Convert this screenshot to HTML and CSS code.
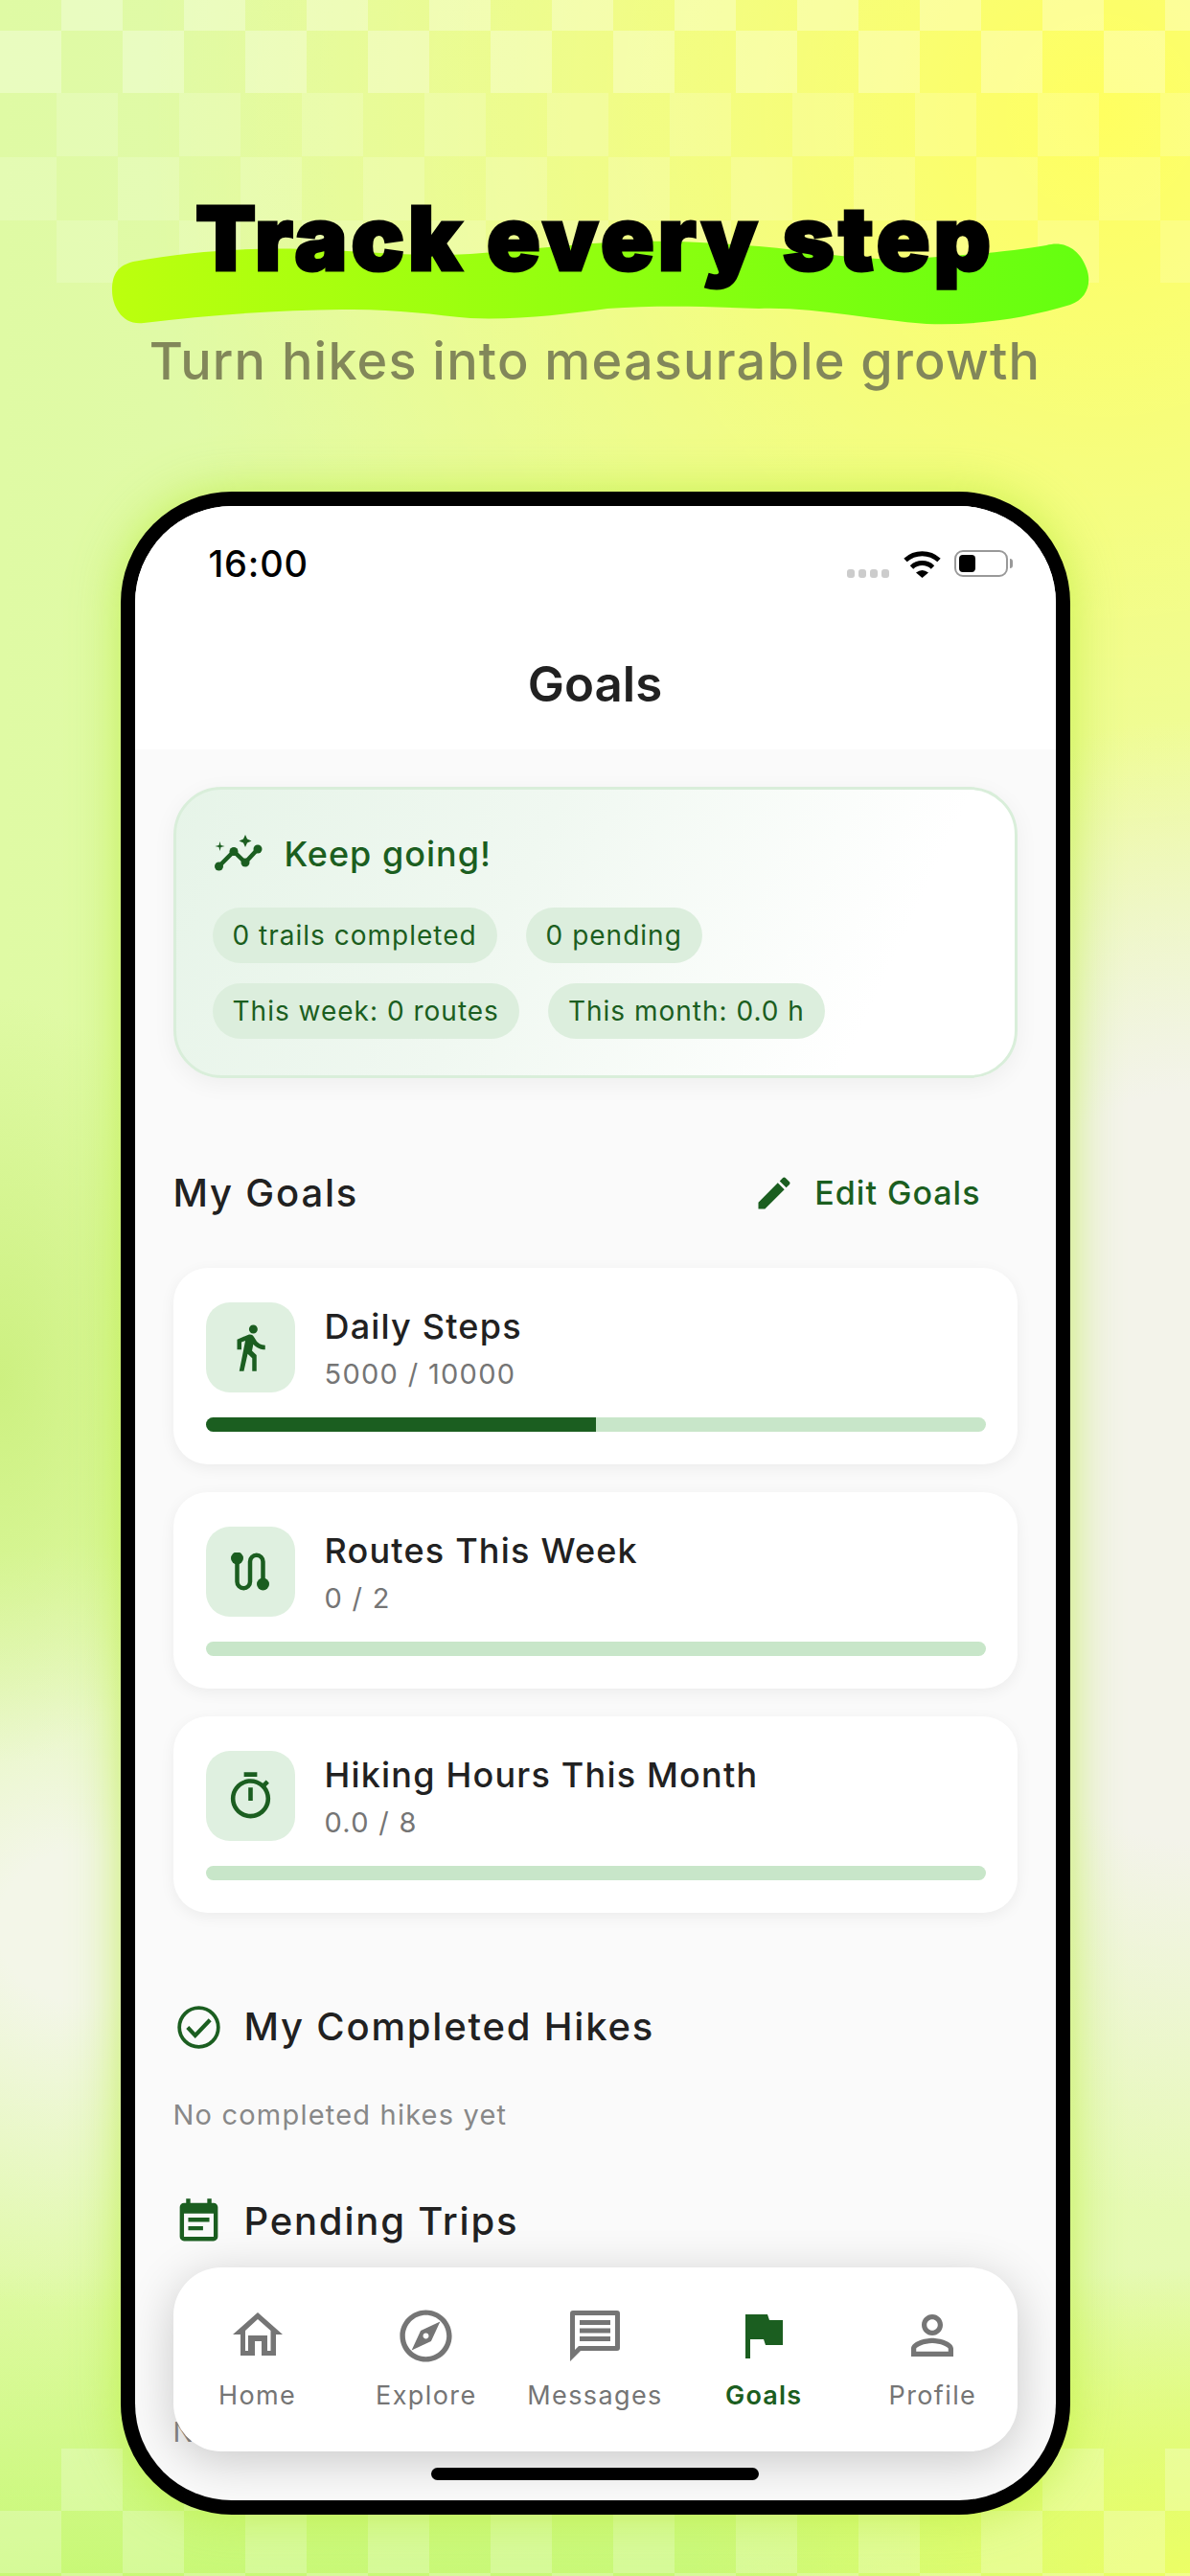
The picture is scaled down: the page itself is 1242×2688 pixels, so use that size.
FILE: index.html
```html
<!DOCTYPE html>
<html lang="en">
<head>
<meta charset="utf-8">
<title>Track every step</title>
<link rel="stylesheet" href="styles.css">
</head>
<body>
<main class="page">
  <div class="checker checker-a"></div>
  <div class="checker checker-b"></div>
  <div class="checker checker-c"></div>

  <header class="hero">
    <svg class="swash" viewBox="0 0 1242 513" aria-hidden="true">
      <defs>
        <linearGradient id="sw" x1="0" x2="1" y1="0" y2="0">
          <stop offset="0" stop-color="#bcff0e"/>
          <stop offset="1" stop-color="#64ff10"/>
        </linearGradient>
      </defs>
      <path fill="url(#sw)" d="M139 273C200 262 260 258 317 260C380 262 430 268 491 265C560 260 630 250 697 252C730 252 760 255 792 257C850 262 900 273 951 270C1010 266 1060 262 1092 256C1112 250 1128 262 1134 280C1140 296 1134 312 1117 318C1070 332 1020 340 967 338C910 334 850 320 792 322C740 320 690 318 634 322C590 328 540 334 491 332C450 328 410 322 357 323C290 324 220 328 150 337C128 340 117 320 117 303C117 285 124 277 139 273Z"/>
    </svg>
    <h1 class="hero-title">Track every step</h1>
    <p class="hero-sub">Turn hikes into measurable growth</p>
  </header>

  <section class="phone">
    <div class="screen">
      <div class="topbar">
        <div class="status">
          <span class="time">16:00</span>
          <div class="status-icons">
            <span class="signal"><i></i><i></i><i></i><i></i></span>
            <svg class="wifi" viewBox="0 0 39 30" aria-hidden="true">
              <path d="M2 11.500A26 26 0 0 1 37 11.500" fill="none" stroke="#000" stroke-width="5"/>
              <path d="M8.500 19A16 16 0 0 1 30.500 19" fill="none" stroke="#000" stroke-width="5"/>
              <path d="M13 24.500Q19.500 19.500 26 24.500L19.500 30Z" fill="#000"/>
            </svg>
            <span class="battery"><span class="battery-fill"></span></span>
            <span class="battery-nub"></span>
          </div>
        </div>
        <h2 class="app-title">Goals</h2>
      </div>

      <div class="content">
        <article class="summary">
          <div class="summary-head">
            <svg class="spark" viewBox="-2 0 54 40" aria-hidden="true">
              <path d="M4.500 33L20 17.500L32 29L45 15" fill="none" stroke="#1b5e20" stroke-width="4.500"/>
              <circle cx="4.500" cy="33" r="4.500" fill="#1b5e20"/>
              <circle cx="20" cy="17.500" r="4.500" fill="#1b5e20"/>
              <circle cx="32" cy="29" r="4.500" fill="#1b5e20"/>
              <circle cx="45" cy="15" r="4.500" fill="#1b5e20"/>
              <path d="M32 0L34 4.500L38.500 6.500L34 8.500L32 13L30 8.500L25.500 6.500L30 4.500Z" fill="#1b5e20"/>
              <path d="M5.500 7L6.500 11L10.500 12L6.500 13L5.500 17L4.500 13L.5 12L4.500 11Z" fill="#1b5e20"/>
            </svg>
            <h3 class="summary-title">Keep going!</h3>
          </div>
          <div class="chips">
            <span class="chip">0 trails completed</span>
            <span class="chip">0 pending</span>
            <span class="chip">This week: 0 routes</span>
            <span class="chip">This month: 0.0 h</span>
          </div>
        </article>

        <div class="goals-head">
          <h3 class="section-title">My Goals</h3>
          <div class="edit">
            <svg class="edit-icon" viewBox="0 0 24 24" aria-hidden="true"><path d="M3 17.250V21h3.750L17.810 9.940l-3.750-3.750L3 17.250zM20.710 7.040c.39-.39.39-1.020 0-1.410l-2.340-2.340c-.39-.39-1.020-.39-1.410 0l-1.830 1.830 3.750 3.750 1.830-1.830z"/></svg>
            <span class="edit-label">Edit Goals</span>
          </div>
        </div>

        <div class="goal-list">
          <article class="goal">
            <div class="goal-top">
              <div class="goal-icon">
                <svg class="walk" viewBox="0 0 24 24" aria-hidden="true"><path d="M13.500 5.500c1.100 0 2-.9 2-2s-.9-2-2-2-2 .9-2 2 .9 2 2 2zM9.800 8.900L7 23h2.100l1.800-8 2.100 2v6h2v-7.500l-2.100-2 .6-3C14.800 12 16.800 13 19 13v-2c-1.900 0-3.500-1-4.300-2.400l-1-1.600c-.4-.6-1-1-1.700-1-.3 0-.5.1-.8.1L6 8.300V13h2V9.600l1.800-.7"/></svg>
              </div>
              <div class="goal-text">
                <h4 class="goal-name">Daily Steps</h4>
                <p class="goal-value">5000 / 10000</p>
              </div>
            </div>
            <div class="track"><div class="bar" style="width:50%"></div></div>
          </article>

          <article class="goal">
            <div class="goal-top">
              <div class="goal-icon">
                <svg class="route" viewBox="0 0 40 40" aria-hidden="true">
                  <path d="M6.500 6V30.500a6.750 6.750 0 0 0 13.500 0V9.500a6.750 6.750 0 0 1 13.500 0V33" fill="none" stroke="#1b5e20" stroke-width="4.500"/>
                  <circle cx="6.500" cy="6" r="6.500" fill="#1b5e20"/>
                  <circle cx="33.500" cy="33" r="6.500" fill="#1b5e20"/>
                </svg>
              </div>
              <div class="goal-text">
                <h4 class="goal-name">Routes This Week</h4>
                <p class="goal-value">0 / 2</p>
              </div>
            </div>
            <div class="track"></div>
          </article>

          <article class="goal">
            <div class="goal-top">
              <div class="goal-icon">
                <svg class="timer" viewBox="0 0 24 24" aria-hidden="true"><path d="M15 1H9v2h6V1zm-4 13h2V8h-2v6zm8.030-6.610l1.420-1.420c-.43-.51-.9-.99-1.410-1.410l-1.420 1.420C16.070 4.740 14.120 4 12 4c-4.970 0-9 4.030-9 9s4.020 9 9 9 9-4.030 9-9c0-2.120-.74-4.070-1.970-5.610zM12 20c-3.870 0-7-3.130-7-7s3.130-7 7-7 7 3.130 7 7-3.130 7-7 7z"/></svg>
              </div>
              <div class="goal-text">
                <h4 class="goal-name">Hiking Hours This Month</h4>
                <p class="goal-value">0.0 / 8</p>
              </div>
            </div>
            <div class="track"></div>
          </article>
        </div>

        <div class="list-head list-head-done">
          <svg class="list-icon" viewBox="0 0 24 24" aria-hidden="true">
            <circle cx="12" cy="12" r="9.200" fill="none" stroke="#1b5e20" stroke-width="1.700"/>
            <path d="M6.700 12L10.300 15.800L17.300 8.500" fill="none" stroke="#1b5e20" stroke-width="1.900"/>
          </svg>
          <h3 class="section-title">My Completed Hikes</h3>
        </div>
        <p class="empty empty-done">No completed hikes yet</p>

        <div class="list-head list-head-pending">
          <svg class="list-icon" viewBox="0 0 24 24" aria-hidden="true"><path fill="#1b5e20" d="M17 10H7v2h10v-2zm2-7h-1V1h-2v2H8V1H6v2H5c-1.110 0-1.990.9-1.990 2L3 19c0 1.100.89 2 2 2h14c1.100 0 2-.9 2-2V5c0-1.100-.9-2-2-2zm0 16H5V8h14v11zm-5-5H7v2h7v-2z"/></svg>
          <h3 class="section-title">Pending Trips</h3>
        </div>
        <p class="empty empty-pending">No pending trips</p>
      </div>

      <nav class="tabbar">
        <div class="tab">
          <span class="tab-icon">
            <svg class="ic-home" viewBox="0 0 52 48" aria-hidden="true"><path fill-rule="evenodd" d="M26 0L52 23H45V45H8V23H0ZM26 7L13 19V40H16V24H36V40H39.500V19ZM23 30V45H30V30Z"/></svg>
          </span>
          <span class="tab-label">Home</span>
        </div>
        <div class="tab">
          <span class="tab-icon">
            <svg class="ic-compass" viewBox="0 0 24 24" aria-hidden="true"><path d="M12 2C6.480 2 2 6.480 2 12s4.480 10 10 10 10-4.480 10-10S17.520 2 12 2zm0 18c-4.410 0-8-3.590-8-8s3.590-8 8-8 8 3.590 8 8-3.590 8-8 8zm-5.500-2.500l7.510-3.490L17.500 6.500 9.990 9.990 6.500 17.500zm5.500-6.600c.61 0 1.100.49 1.100 1.100s-.49 1.100-1.100 1.100-1.100-.49-1.100-1.100.49-1.100 1.100-1.100z"/></svg>
          </span>
          <span class="tab-label">Explore</span>
        </div>
        <div class="tab">
          <span class="tab-icon">
            <svg class="ic-chat" viewBox="0 0 52 53" aria-hidden="true"><path fill-rule="evenodd" d="M3 0H49A3 3 0 0 1 52 3V39A3 3 0 0 1 49 42H11L0 53V3A3 3 0 0 1 3 0ZM5 5V41L9 37H47V5ZM10 10H42V15H10ZM10 18.500H42V23.500H10ZM10 27H42V32H10Z"/></svg>
          </span>
          <span class="tab-label">Messages</span>
        </div>
        <div class="tab tab-active">
          <span class="tab-icon">
            <svg class="ic-flag" viewBox="0 -2 39 48" aria-hidden="true"><path d="M0 0H23L25 6H39V32H21L19 26H5V46H0Z"/></svg>
          </span>
          <span class="tab-label">Goals</span>
        </div>
        <div class="tab">
          <span class="tab-icon">
            <svg class="ic-person" viewBox="0 0 24 24" aria-hidden="true"><path d="M12 5.900c1.160 0 2.100.94 2.100 2.100s-.94 2.100-2.100 2.100S9.900 9.160 9.900 8s.94-2.100 2.100-2.100m0 9c2.970 0 6.100 1.460 6.100 2.100v1.100H5.900V17c0-.64 3.130-2.100 6.100-2.100M12 4C9.790 4 8 5.790 8 8s1.790 4 4 4 4-1.790 4-4-1.790-4-4-4zm0 9c-2.670 0-8 1.340-8 4v3h16v-3c0-2.660-5.330-4-8-4z"/></svg>
          </span>
          <span class="tab-label">Profile</span>
        </div>
      </nav>

      <div class="home-indicator"></div>
    </div>
  </section>
</main>
</body>
</html>
```
FILE: styles.css
```css
* { box-sizing: border-box; }

html, body { margin: 0; padding: 0; }

body { font-family: "Inter", "Liberation Sans", sans-serif; color: #212121; }

h1, h2, h3, h4, p { margin: 0; font-weight: inherit; }

.page {
  position: relative;
  width: 1242px;
  height: 2688px;
  overflow: hidden;
  background:
    radial-gradient(ellipse 230px 400px at 0 1440px, rgba(195, 235, 110, .65), rgba(195, 235, 110, 0)),
    radial-gradient(ellipse 460px 400px at 90px 2010px, rgba(243, 246, 232, 1) 20%, rgba(243, 246, 232, 0)),
    radial-gradient(ellipse 520px 780px at 1242px 1530px, rgba(243, 243, 234, 1) 50%, rgba(243, 243, 234, 0)),
    radial-gradient(ellipse 1000px 1050px at 1150px 120px, rgba(255, 255, 96, 1), rgba(255, 255, 96, 0)),
    radial-gradient(ellipse 520px 320px at 1242px 2688px, rgba(238, 255, 100, .95), rgba(238, 255, 100, 0)),
    linear-gradient(180deg, rgba(196, 248, 110, 0) 88%, rgba(196, 248, 110, .85) 100%),
    linear-gradient(90deg, #dffaa4, #e6fab4);
}

.checker {
  position: absolute;
  left: 0;
  width: 100%;
  background-image: repeating-conic-gradient(rgba(255, 255, 255, .3) 0 25%, rgba(255, 255, 255, 0) 0 50%);
}

.checker-a {
  top: 0;
  height: 97px;
  background-size: 128px 130px;
  background-position: 0 -33px;
}

.checker-b {
  top: 97px;
  height: 198px;
  background-size: 128px 133px;
  background-position: -5px 0;
  opacity: .55;
}

.checker-c {
  top: 2555px;
  height: 133px;
  background-size: 128px 130px;
  background-position: 0 0;
  opacity: .8;
}

.hero {
  position: relative;
  height: 513px;
  padding-top: 199px;
  text-align: center;
}

.swash {
  position: absolute;
  left: 0;
  top: 0;
  width: 1242px;
  height: 513px;
}

.hero-title {
  position: relative;
  font-size: 92px;
  line-height: 100px;
  font-weight: 900;
  color: #000;
  -webkit-text-stroke: 3px #000;
  letter-spacing: 4px;
}

.hero-sub {
  position: relative;
  margin-top: 47px;
  font-size: 54px;
  line-height: 62px;
  font-weight: 500;
  color: #82875a;
  letter-spacing: 1.200px;
}

.phone {
  position: relative;
  width: 991px;
  height: 2111px;
  margin: 0 auto;
  border: 15px solid #000;
  border-radius: 116px;
  background: #000;
  box-shadow: 0 0 50px rgba(185, 238, 60, .75);
}

.screen {
  position: relative;
  height: 100%;
  overflow: hidden;
  border-radius: 101px;
  display: flex;
  flex-direction: column;
  background: #fafafa;
}

.topbar {
  height: 254px;
  padding-top: 45px;
  background: #fff;
}

.status {
  height: 30px;
  padding: 0 45px 0 77px;
  display: flex;
  justify-content: space-between;
  align-items: center;
}

.time {
  font-size: 38px;
  line-height: 36px;
  font-weight: 500;
  color: #000;
  letter-spacing: .8px;
}

.status-icons {
  display: flex;
  align-items: center;
}

.signal {
  display: flex;
  gap: 4px;
  margin-right: 15px;
  align-self: flex-end;
}

.signal i {
  width: 8px;
  height: 9px;
  border-radius: 3px;
  background: #ccc;
}

.wifi {
  width: 39px;
  height: 30px;
  margin-right: 14px;
}

.battery {
  width: 56px;
  height: 28px;
  padding: 3px;
  border: 2px solid #999;
  border-radius: 9px;
  background: #fff;
}

.battery-fill {
  display: block;
  width: 17px;
  height: 100%;
  border-radius: 4px;
  background: #000;
}

.battery-nub {
  width: 3px;
  height: 10px;
  margin-left: 2px;
  border-radius: 0 3px 3px 0;
  background: #999;
}

.app-title {
  margin-top: 81px;
  text-align: center;
  font-size: 51px;
  line-height: 60px;
  font-weight: 600;
}

.content {
  flex: 1;
  min-height: 0;
  padding: 39px 40px 0;
}

.summary {
  height: 304px;
  padding: 45px 38px 0;
  border: 3px solid #d9eeda;
  border-radius: 50px;
  background: linear-gradient(115deg, #e6f4e8 0%, #f0f8f1 40%, #fff 82%);
  box-shadow: 0 6px 24px rgba(0, 0, 0, .05);
}

.summary-head {
  display: flex;
  align-items: center;
  gap: 21px;
  height: 44px;
}

.spark {
  width: 54px;
  height: 40px;
}

.summary-title {
  font-size: 36px;
  line-height: 44px;
  font-weight: 500;
  color: #1b5e20;
  letter-spacing: 1px;
}

.chips {
  display: flex;
  flex-wrap: wrap;
  gap: 21px 30px;
  margin-top: 34px;
}

.chip {
  height: 58px;
  padding: 0 21px;
  border-radius: 29px;
  background: #dceedd;
  font-size: 28px;
  line-height: 58px;
  letter-spacing: 1px;
  color: #1b5e20;
}

.goals-head {
  display: flex;
  justify-content: space-between;
  align-items: center;
  height: 50px;
  margin-top: 95px;
  padding-right: 38px;
}

.section-title {
  font-size: 40px;
  line-height: 50px;
  font-weight: 500;
  letter-spacing: 1.800px;
}

.edit {
  display: flex;
  align-items: center;
  gap: 20px;
}

.edit-icon {
  width: 44px;
  height: 44px;
  fill: #1b5e20;
}

.edit-label {
  font-size: 34px;
  line-height: 44px;
  font-weight: 500;
  color: #1b5e20;
  letter-spacing: 1px;
}

.goal-list {
  display: flex;
  flex-direction: column;
  gap: 29px;
  margin-top: 53px;
}

.goal {
  height: 205px;
  padding: 36px 33px 0 34px;
  border-radius: 36px;
  background: #fff;
  box-shadow: 0 4px 16px rgba(0, 0, 0, .06);
}

.goal-top {
  display: flex;
  gap: 31px;
}

.goal-icon {
  flex: none;
  width: 93px;
  height: 94px;
  border-radius: 25px;
  background: #dff0e0;
  display: flex;
  align-items: center;
  justify-content: center;
}

.goal-icon svg { fill: #1b5e20; }

.walk { width: 54px; height: 54px; }

.route { width: 40px; height: 40px; }

.timer { width: 55px; height: 55px; }

.goal-name {
  font-size: 36px;
  line-height: 50px;
  font-weight: 500;
  letter-spacing: 1.200px;
}

.goal-value {
  margin-top: 5px;
  font-size: 29px;
  line-height: 40px;
  color: #757575;
  letter-spacing: 1.300px;
}

.track {
  height: 15px;
  margin-top: 25px;
  border-radius: 8px;
  overflow: hidden;
  background: #c8e6c9;
}

.bar {
  height: 100%;
  background: #1b5e20;
}

.list-head {
  display: flex;
  align-items: center;
  gap: 21px;
  height: 50px;
}

.list-head-done { margin-top: 94px; }

.list-head-pending { margin-top: 66px; }

.list-icon {
  width: 53px;
  height: 53px;
  flex: none;
}

.empty {
  font-size: 29px;
  line-height: 40px;
  color: #888;
  letter-spacing: 1.200px;
}

.empty-done { margin-top: 47px; }

.empty-pending { margin-top: 175px; }

.tabbar {
  position: absolute;
  left: 40px;
  right: 40px;
  bottom: 51px;
  height: 192px;
  display: grid;
  grid-template-columns: repeat(5, 1fr);
  padding-top: 38px;
  border-radius: 50px;
  background: #fff;
  box-shadow: 0 10px 50px rgba(0, 0, 0, .2);
}

.tab {
  display: flex;
  flex-direction: column;
  align-items: center;
}

.tab-icon {
  height: 66px;
  display: flex;
  align-items: center;
  justify-content: center;
}

.tab-icon svg { fill: #757575; display: block; }

.ic-home { width: 52px; height: 48px; }

.ic-compass { width: 65px; height: 65px; }

.ic-chat { width: 52px; height: 53px; }

.ic-flag { width: 39px; height: 48px; }

.ic-person { width: 66px; height: 66px; }

.tab-label {
  margin-top: 12px;
  font-size: 27px;
  line-height: 36px;
  color: #757575;
  letter-spacing: 1.400px;
}

.tab-active .tab-label {
  font-weight: 600;
  color: #1b5e20;
  letter-spacing: 1.200px;
}

.tab-active .tab-icon svg { fill: #1b5e20; }

.home-indicator {
  position: absolute;
  left: 309px;
  bottom: 21px;
  width: 342px;
  height: 13px;
  border-radius: 7px;
  background: #000;
}
```
